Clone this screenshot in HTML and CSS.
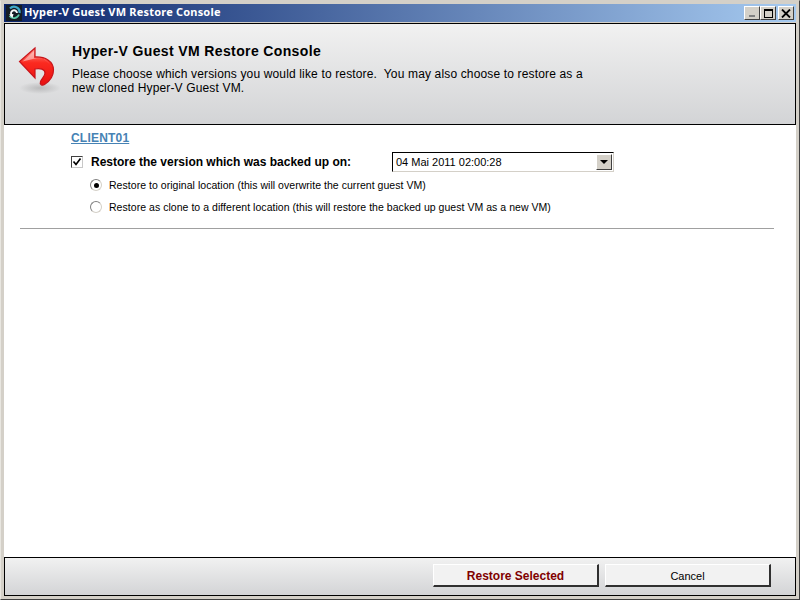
FILE: index.html
```html
<!DOCTYPE html>
<html lang="en">
<head>
<meta charset="utf-8">
<title>Hyper-V Guest VM Restore Console</title>
<link rel="stylesheet" href="styles.css">
</head>
<body>
<div class="window">
  <div class="titlebar">
    <svg class="app-icon" width="16" height="16" viewBox="0 0 16 16">
      <rect width="16" height="16" fill="#141c24"/>
      <path d="M4 3.500A5.500 5.500 0 0 1 13.500 8" fill="none" stroke="#3fa8c8" stroke-width="2.200"/>
      <path d="M13 9.500A5.500 5.500 0 0 1 3.500 11" fill="none" stroke="#59c9a8" stroke-width="1.800"/>
      <path d="M6 10.500A3 3 0 1 1 11 8" fill="none" stroke="#f4f8f8" stroke-width="1.900"/>
      <path d="M3 9.500l3.500 3.500 1-4z" fill="#fff"/>
    </svg>
    <span class="title-text">Hyper-V Guest VM Restore Console</span>
    <div class="caption-buttons">
      <div class="cap-btn"><span class="cap-min"></span></div>
      <div class="cap-btn"><span class="cap-max"></span></div>
      <div class="cap-btn cap-close">
        <svg width="10" height="9" viewBox="0 0 10 9"><path d="M1 0.500l8 8M9 0.500l-8 8" stroke="#000" stroke-width="1.800" fill="none"/></svg>
      </div>
    </div>
  </div>
  <header class="banner">
    <svg class="banner-icon" width="44" height="50" viewBox="0 0 44 50">
      <defs>
        <linearGradient id="arrowFill" x1="0" y1="0" x2="0" y2="1">
          <stop offset="0" stop-color="#ff9a90"/>
          <stop offset="0.4" stop-color="#fb2a20"/>
          <stop offset="1" stop-color="#e81010"/>
        </linearGradient>
        <radialGradient id="shadow">
          <stop offset="0" stop-color="#000" stop-opacity="0.16"/>
          <stop offset="1" stop-color="#000" stop-opacity="0"/>
        </radialGradient>
      </defs>
      <ellipse cx="22" cy="42" rx="21" ry="6" fill="url(#shadow)"/>
      <path d="M17 2L1.500 15.500 17 32V23C22 22 27 23 27 27 27 30 24 32 22.500 35.500 21.500 38.500 24 40 26.500 38.500 32 35 35.500 30 35.500 24 35.500 15 27 10.500 17 11Z" fill="url(#arrowFill)" stroke="#c8141a" stroke-width="1.200"/>
      <path d="M16 5L4.500 15.500 17 12.500C26 11.500 32 16 33.500 23 32 15 26 11.500 16 12Z" fill="#fff" fill-opacity="0.45"/>
    </svg>
    <div class="banner-text">
      <h1 class="banner-title">Hyper-V Guest VM Restore Console</h1>
      <p class="banner-desc">Please choose which versions you would like to restore.&nbsp; You may also choose to restore as a<br>new cloned Hyper-V Guest VM.</p>
    </div>
  </header>
  <main class="content">
    <a class="vm-link">CLIENT01</a>
    <div class="version-row">
      <label class="check-label">
        <span class="checkbox">
          <svg width="10" height="10" viewBox="0 0 10 10"><path d="M1.500 4.500l2.500 3L8.500 1.500" fill="none" stroke="#000" stroke-width="1.700"/></svg>
        </span>
        <span class="check-text">Restore the version which was backed up on:</span>
      </label>
      <div class="combo">
        <span class="combo-value">04 Mai 2011 02:00:28</span>
        <span class="combo-btn"><span class="combo-arrow"></span></span>
      </div>
    </div>
    <div class="radio-row radio-row-first">
      <span class="radio radio-on"></span>
      <span class="radio-text">Restore to original location (this will overwrite the current guest VM)</span>
    </div>
    <div class="radio-row">
      <span class="radio"></span>
      <span class="radio-text">Restore as clone to a different location (this will restore the backed up guest VM as a new VM)</span>
    </div>
    <hr class="divider">
  </main>
  <footer class="footer">
    <button class="btn btn-primary">Restore Selected</button>
    <button class="btn">Cancel</button>
  </footer>
</div>
</body>
</html>
```

FILE: styles.css
```css
html, body {
  margin: 0;
  padding: 0;
  background: #fff;
}

.window {
  box-sizing: border-box;
  width: 800px;
  height: 600px;
  background: #d4d0c8;
  border-top: 1px solid #d4d0c8;
  border-left: 1px solid #e8e6e0;
  border-right: 1px solid #404040;
  border-bottom: 1px solid #404040;
  padding: 3px 3px 3px;
  display: flex;
  flex-direction: column;
  font-family: "Liberation Sans", Arial, sans-serif;
  color: #000;
}

.titlebar {
  height: 18px;
  flex: none;
  display: flex;
  align-items: center;
  background: linear-gradient(to right, #0a246a, #a6caf0);
  margin-bottom: 1px;
}

.app-icon {
  margin: 0 3px 0 2px;
  flex: none;
}

.title-text {
  color: #fff;
  font-family: "Noto Sans", sans-serif;
  font-weight: 700;
  font-size: 11px;
  line-height: 16px;
  letter-spacing: 0.2px;
  margin: -2px 0 0 -1px;
  white-space: nowrap;
}

.caption-buttons {
  margin-left: auto;
  margin-right: 2px;
  display: flex;
}

.cap-btn {
  box-sizing: border-box;
  width: 16px;
  height: 14px;
  background: #d4d0c8;
  border-top: 1px solid #fff;
  border-left: 1px solid #fff;
  border-right: 1px solid #404040;
  border-bottom: 1px solid #404040;
  position: relative;
  display: flex;
  align-items: center;
  justify-content: center;
}

.cap-close {
  margin-left: 2px;
}

.cap-min {
  position: absolute;
  left: 4px;
  bottom: 2px;
  width: 6px;
  height: 2px;
  background: #808080;
}

.cap-max {
  box-sizing: border-box;
  width: 9px;
  height: 9px;
  border: 1px solid #000;
  border-top-width: 2px;
}

.banner {
  box-sizing: border-box;
  height: 102px;
  flex: none;
  border: 1px solid #000;
  background: linear-gradient(to bottom, #f1f1f1, #d3d4d6);
  display: flex;
}

.banner-icon {
  margin: 22px 0 0 13px;
  flex: none;
}

.banner-text {
  margin: 19px 0 0 10px;
}

.banner-title {
  margin: 0;
  font-size: 14px;
  line-height: 17px;
  font-weight: 700;
  letter-spacing: 0.37px;
}

.banner-desc {
  margin: 7px 0 0;
  font-size: 12px;
  line-height: 14px;
  letter-spacing: 0.15px;
}

.content {
  flex: 1;
  background: #fff;
  padding: 6px 22px 0 16px;
  min-height: 0;
}

.vm-link {
  display: block;
  margin-left: 51px;
  font-size: 12px;
  line-height: 14px;
  font-weight: 700;
  letter-spacing: 0.2px;
  color: #4682b4;
  text-decoration: underline;
}

.version-row {
  display: flex;
  align-items: center;
  margin: 7px 0 0 51px;
  height: 20px;
}

.check-label {
  display: flex;
  align-items: center;
  width: 321px;
}

.checkbox {
  box-sizing: border-box;
  width: 12px;
  height: 12px;
  border: 1px solid #404040;
  border-right-color: #c8c8c8;
  border-bottom-color: #c8c8c8;
  background: #fff;
  display: flex;
  flex: none;
  margin-right: 8px;
}

.checkbox svg {
  display: block;
}

.check-text {
  font-size: 12px;
  font-weight: 700;
  white-space: nowrap;
}

.combo {
  box-sizing: border-box;
  width: 222px;
  height: 20px;
  background: #fff;
  border: 1px solid #000;
  border-right-color: #d4d0c8;
  border-bottom-color: #d4d0c8;
  display: flex;
  align-items: center;
  padding-left: 3px;
}

.combo-value {
  font-size: 11px;
  flex: 1;
}

.combo-btn {
  box-sizing: border-box;
  width: 16px;
  height: 16px;
  margin-right: 1px;
  background: #d4d0c8;
  border-top: 1px solid #fff;
  border-left: 1px solid #fff;
  border-right: 1px solid #404040;
  border-bottom: 1px solid #404040;
  display: flex;
  align-items: center;
  justify-content: center;
}

.combo-arrow {
  width: 0;
  height: 0;
  border-left: 4px solid transparent;
  border-right: 4px solid transparent;
  border-top: 4px solid #000;
}

.radio-row {
  display: flex;
  align-items: center;
  height: 22px;
  margin-left: 70px;
}

.radio-row-first {
  margin-top: 2px;
}

.radio {
  box-sizing: border-box;
  width: 12px;
  height: 12px;
  border-radius: 50%;
  border: 1px solid #808080;
  border-right-color: #d4d0c8;
  border-bottom-color: #d4d0c8;
  background: #fff;
  display: flex;
  align-items: center;
  justify-content: center;
  flex: none;
  margin-right: 7px;
}

.radio-on::after {
  content: "";
  width: 5px;
  height: 5px;
  border-radius: 50%;
  background: #000;
}

.radio-text {
  font-size: 10.5px;
  letter-spacing: 0.04px;
  white-space: nowrap;
}

.divider {
  margin: 10px 0 0;
  border: 0;
  height: 1px;
  background: #a0a0a0;
}

.footer {
  box-sizing: border-box;
  height: 39px;
  flex: none;
  border: 1px solid #000;
  background: linear-gradient(to bottom, #f1f1f1, #d3d4d6);
  display: flex;
  justify-content: flex-end;
  align-items: flex-start;
  gap: 6px;
  padding: 6px 24px 0 0;
}

.btn {
  box-sizing: border-box;
  width: 166px;
  height: 23px;
  padding: 1px 0 0;
  font-family: "Liberation Sans", Arial, sans-serif;
  font-size: 11px;
  color: #000;
  background: #f2f2f2;
  border-top: 1px solid #fff;
  border-left: 1px solid #fff;
  border-right: 2px solid #303030;
  border-bottom: 2px solid #303030;
}

.btn-primary {
  font-size: 12px;
  font-weight: 700;
  color: #800000;
}
```
